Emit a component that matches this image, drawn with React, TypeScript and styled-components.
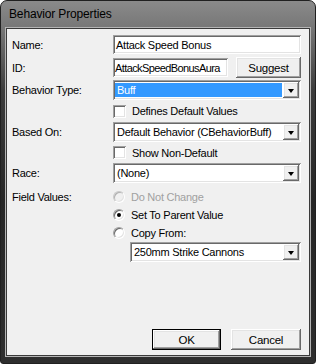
import React from 'react';
import styled, { createGlobalStyle, css } from 'styled-components';

const Global = createGlobalStyle`
  html, body {
    margin: 0;
    padding: 0;
    background: #ffffff;
  }
  * {
    box-sizing: border-box;
  }
`;

const sunken = css`
  box-shadow: inset 1px 1px #a0a0a0, inset -1px -1px #ffffff, inset 2px 2px #696969, inset -2px -2px #e3e3e3;
`;

const raised = css`
  box-shadow: inset -1px -1px #696969, inset 1px 1px #ffffff, inset -2px -2px #a0a0a0, inset 2px 2px #e3e3e3;
`;

const Window = styled.div`
  width: 316px;
  height: 364px;
  display: flex;
  flex-direction: column;
  border-radius: 7px 7px 3px 3px;
  border: 1px solid #202020;
  background: linear-gradient(to bottom, #8a8a8a 0px, #767676 28px, #3c3c3c 90px, #262626 200px, #2e2e2e 100%);
  font-family: 'Liberation Sans', Arial, sans-serif;
  font-size: 11px;
  letter-spacing: -0.25px;
  color: #000;
  overflow: hidden;
`;

const TitleBar = styled.div`
  height: 27px;
  display: flex;
  align-items: center;
  padding-left: 8px;
  padding-bottom: 1px;
  font-size: 12px;
  letter-spacing: -0.15px;
  color: #000;
`;

const Client = styled.div`
  flex: 1;
  margin: 0 5px 7px 5px;
  border: 1px solid #3a3a3a;
  outline: 1px solid #b4b4b4;
  background: #f0f0f0;
  padding: 6px 8px 5px 5px;
  display: flex;
  flex-direction: column;
`;

const Row = styled.div<{ $h: number; $top?: number }>`
  display: grid;
  grid-template-columns: 101px 1fr;
  align-items: center;
  height: ${(p) => p.$h}px;
  margin-top: ${(p) => p.$top ?? 0}px;
`;

const Label = styled.span`
  white-space: nowrap;
`;

const Cell = styled.div<{ $indent?: number; $gap?: number }>`
  display: flex;
  align-items: center;
  gap: ${(p) => p.$gap ?? 6}px;
  padding-left: ${(p) => p.$indent ?? 0}px;
  height: 100%;
`;

const Edit = styled.div`
  ${sunken};
  background: #fff;
  height: 19px;
  flex: 1;
  display: flex;
  align-items: center;
  padding: 0 3px;
  white-space: nowrap;
  overflow: hidden;
`;

const TightEdit = styled(Edit)`
  letter-spacing: -0.6px;
  padding-left: 2px;
`;

const Combo = styled.div`
  ${sunken};
  background: #fff;
  height: 20px;
  flex: 1;
  display: flex;
  align-items: stretch;
  padding: 2px;
`;

const ComboText = styled.div<{ $selected?: boolean }>`
  flex: 1;
  display: flex;
  align-items: center;
  padding-left: 2px;
  margin: 1px 1px 1px 0;
  white-space: nowrap;
  overflow: hidden;
  background: ${(p) => (p.$selected ? '#3399ff' : 'transparent')};
  color: ${(p) => (p.$selected ? '#fff' : '#000')};
`;

const DropButton = styled.div`
  ${raised};
  width: 16px;
  background: #f0f0f0;
  display: flex;
  align-items: center;
  justify-content: center;
`;

const Arrow = styled.div`
  width: 0;
  height: 0;
  border-left: 3.5px solid transparent;
  border-right: 3.5px solid transparent;
  border-top: 4px solid #000;
  margin-top: 1px;
`;

const Button = styled.div<{ $default?: boolean; $w: number }>`
  width: ${(p) => p.$w}px;
  height: 21px;
  flex: none;
  background: #f0f0f0;
  display: flex;
  align-items: center;
  justify-content: center;
  font-size: 11.5px;
  ${raised};
  ${(p) =>
    p.$default &&
    css`
      border: 1px solid #000;
    `}
`;

const Check = styled.div`
  ${sunken};
  width: 13px;
  height: 13px;
  background: #fff;
  flex: none;
`;

const Radio = styled.div<{ $disabled?: boolean; $checked?: boolean }>`
  width: 12px;
  height: 12px;
  border-radius: 50%;
  flex: none;
  position: relative;
  border: 1px solid;
  border-color: ${(p) => (p.$disabled ? '#c8c8c8 #fff #fff #c8c8c8' : '#a0a0a0 #fff #fff #a0a0a0')};
  background: ${(p) => (p.$disabled ? '#f0f0f0' : '#fff')};
  box-shadow: inset 1px 1px ${(p) => (p.$disabled ? '#b0b0b0' : '#696969')}, inset -1px -1px #e3e3e3;

  &::after {
    content: '';
    display: ${(p) => (p.$checked ? 'block' : 'none')};
    position: absolute;
    left: 3px;
    top: 3px;
    width: 4px;
    height: 4px;
    border-radius: 50%;
    background: #000;
  }
`;

const Option = styled.span<{ $disabled?: boolean }>`
  color: ${(p) => (p.$disabled ? '#a0a0a0' : '#000')};
  white-space: nowrap;
`;

const Footer = styled.div`
  margin-top: auto;
  display: flex;
  justify-content: flex-end;
  gap: 10px;
`;

const ComboBox = ({ text, selected }: { text: string; selected?: boolean }) => (
  <Combo>
    <ComboText $selected={selected}>{text}</ComboText>
    <DropButton>
      <Arrow />
    </DropButton>
  </Combo>
);

const App = () => {
  return (
    <>
      <Global />
      <Window>
        <TitleBar>Behavior Properties</TitleBar>
        <Client>
          <Row $h={19}>
            <Label>Name:</Label>
            <Cell>
              <Edit>Attack Speed Bonus</Edit>
            </Cell>
          </Row>
          <Row $h={21} $top={3}>
            <Label>ID:</Label>
            <Cell $gap={8}>
              <TightEdit>AttackSpeedBonusAura</TightEdit>
              <Button $w={65}>Suggest</Button>
            </Cell>
          </Row>
          <Row $h={20} $top={2}>
            <Label>Behavior Type:</Label>
            <Cell>
              <ComboBox text="Buff" selected />
            </Cell>
          </Row>
          <Row $h={22}>
            <span />
            <Cell>
              <Check />
              <Option>Defines Default Values</Option>
            </Cell>
          </Row>
          <Row $h={20}>
            <Label>Based On:</Label>
            <Cell>
              <ComboBox text="Default Behavior (CBehaviorBuff)" />
            </Cell>
          </Row>
          <Row $h={21}>
            <span />
            <Cell>
              <Check />
              <Option>Show Non-Default</Option>
            </Cell>
          </Row>
          <Row $h={20}>
            <Label>Race:</Label>
            <Cell>
              <ComboBox text="(None)" />
            </Cell>
          </Row>
          <Row $h={18} $top={5}>
            <Label>Field Values:</Label>
            <Cell>
              <Radio $disabled />
              <Option $disabled>Do Not Change</Option>
            </Cell>
          </Row>
          <Row $h={18}>
            <span />
            <Cell>
              <Radio $checked />
              <Option>Set To Parent Value</Option>
            </Cell>
          </Row>
          <Row $h={18}>
            <span />
            <Cell>
              <Radio />
              <Option>Copy From:</Option>
            </Cell>
          </Row>
          <Row $h={20}>
            <span />
            <Cell $indent={17}>
              <ComboBox text="250mm Strike Cannons" />
            </Cell>
          </Row>
          <Footer>
            <Button $default $w={69}>OK</Button>
            <Button $w={70}>Cancel</Button>
          </Footer>
        </Client>
      </Window>
    </>
  );
};

export default App;
